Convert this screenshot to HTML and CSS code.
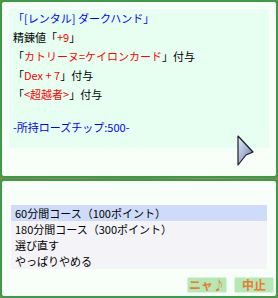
FILE: index.html
```html
<!DOCTYPE html>
<html lang="ja">
  <head>
    <meta charset="UTF-8" />
    <title>ローズチップ交換</title>
    <link rel="stylesheet" href="styles.css">
  </head>

  <body>
    <div class="window top">
      <div class="message">
        <p class="blue">「[レンタル] ダークハンド」</p>
        <p>精錬値「<span class="red">+9</span>」</p>
        <p>「<span class="red">カトリーヌ=ケイロンカード</span>」付与</p>
        <p>「<span class="red">Dex + 7</span>」付与</p>
        <p>「<span class="red">&lt;超越者&gt;</span>」付与</p>
        <p class="blank"></p>
        <p class="blue">-所持ローズチップ:500-</p>
      </div>
      <svg class="next" width="17" height="31" viewBox="0 0 17 31">
        <defs>
          <linearGradient id="arrowFill" x1="0" y1="0" x2="1" y2="1">
            <stop offset="0" stop-color="#e8ecf8" />
            <stop offset="0.5" stop-color="#a8b4d4" />
            <stop offset="1" stop-color="#5a6890" />
          </linearGradient>
        </defs>
        <path d="M1 1 L16 17 L9 20 L1 30 Z" fill="url(#arrowFill)" stroke="#1a1a2a" stroke-width="1.2" stroke-linejoin="round" />
      </svg>
    </div>

    <div class="window bottom">
      <ul class="menu">
        <li class="selected">60分間コース（100ポイント）</li>
        <li>180分間コース（300ポイント）</li>
        <li>選び直す</li>
        <li>やっぱりやめる</li>
      </ul>
      <div class="buttons">
        <button class="btn">ニャ♪</button>
        <button class="btn">中止</button>
      </div>
    </div>
  </body>
</html>
```

FILE: styles.css
```css
* {
  margin: 0;
  padding: 0;
  box-sizing: border-box;
  font-family: "Noto Sans CJK JP", "DejaVu Sans", sans-serif;
}

body {
  width: 278px;
  height: 298px;
  background: linear-gradient(to right, #7e8a3c, #9a8a48, #6f8a3a, #a09050, #7e8a3c);
  overflow: hidden;
}

.window {
  position: relative;
  background-color: #f8fff8;
  border: 2px solid #3c9a48;
  border-radius: 4px;
}

.top {
  height: 178px;
  margin-bottom: 1px;
  padding: 7px 0 0 7px;
}

.message {
  width: 260px;
  height: 139px;
  background-color: #e6fff0;
  padding: 0 0 0 4px;
}

.message p {
  font-size: 11px;
  line-height: 19px;
  height: 19px;
  color: #000;
  white-space: nowrap;
}

.message .blank {
  height: 14px;
}

.message .blue {
  color: #0000ff;
}

.red {
  color: #ff0000;
}

.next {
  position: absolute;
  left: 235px;
  top: 133px;
}

.bottom {
  height: 119px;
  padding: 24px 0 0 9px;
  display: flex;
  flex-direction: column;
}

.menu {
  list-style: none;
  width: 256px;
  height: 64px;
  background-color: #f4f4f8;
}

.menu li {
  font-size: 11px;
  line-height: 16px;
  height: 16px;
  padding-left: 4px;
  color: #000;
  white-space: nowrap;
}

.menu .selected {
  background-color: #cedcfa;
}

.buttons {
  display: flex;
  justify-content: flex-end;
  gap: 7px;
  margin-top: 8px;
  padding-right: 2px;
}

.btn {
  width: 40px;
  height: 16px;
  background-color: #b4e8b4;
  border: 1px solid #d8f4d8;
  border-radius: 2px;
  color: #f07830;
  font-size: 12px;
  font-weight: bold;
  line-height: 14px;
  cursor: pointer;
}
```
